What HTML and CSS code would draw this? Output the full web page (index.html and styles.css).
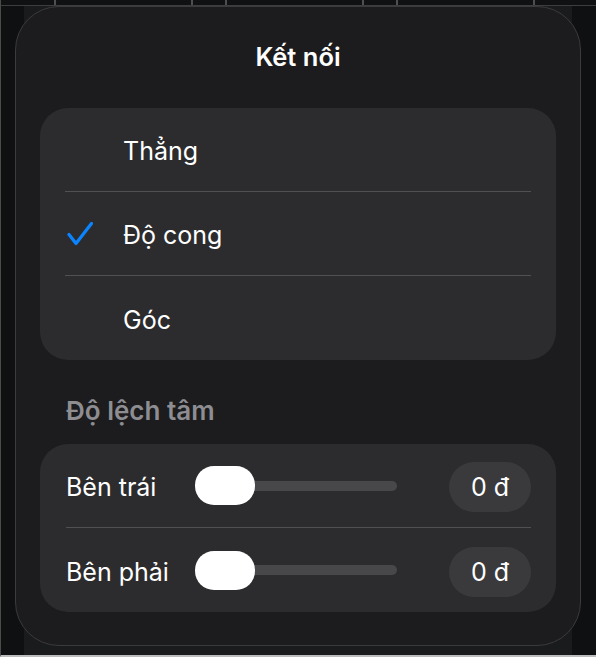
FILE: index.html
```html
<!DOCTYPE html>
<html lang="vi">
<head>
    <meta charset="UTF-8">
    <meta name="viewport" content="width=device-width, initial-scale=1.0">
    <title>Kết nối</title>
    <link rel="stylesheet" href="styles.css">
</head>
<body>
    <!-- mép thanh công cụ phía sau -->
    <div class="edge">
        <span class="cell" style="width:55px"></span>
        <span class="cell" style="width:137px"></span>
        <span class="cell" style="width:34px"></span>
        <span class="cell" style="width:137px"></span>
        <span class="cell" style="width:34px"></span>
        <span class="cell" style="width:137px"></span>
    </div>

    <div class="panel">
        <h2 class="title">Kết nối</h2>

        <div class="card">
            <div class="option">
                <span class="check"></span>
                <span class="label">Thẳng</span>
            </div>
            <div class="option selected">
                <span class="check">
                    <svg width="26" height="24" viewBox="0 0 26 24">
                        <polyline points="2,12.5 9,21.5 24.5,1.5" fill="none" stroke="#0a84ff" stroke-width="3.2" stroke-linecap="round" stroke-linejoin="round"/>
                    </svg>
                </span>
                <span class="label">Độ cong</span>
            </div>
            <div class="option">
                <span class="check"></span>
                <span class="label">Góc</span>
            </div>
        </div>

        <h3 class="section">Độ lệch tâm</h3>

        <div class="card">
            <div class="row">
                <span class="row-label">Bên trái</span>
                <div class="slider">
                    <div class="track"></div>
                    <div class="thumb"></div>
                </div>
                <span class="value">0 đ</span>
            </div>
            <div class="row">
                <span class="row-label">Bên phải</span>
                <div class="slider">
                    <div class="track"></div>
                    <div class="thumb"></div>
                </div>
                <span class="value">0 đ</span>
            </div>
        </div>
    </div>
</body>
</html>
```

FILE: styles.css
```css
* {
    box-sizing: border-box;
}
html, body {
    margin: 0;
    padding: 0;
}
body {
    width: 596px;
    height: 657px;
    overflow: hidden;
    font-family: Inter, "Noto Sans", sans-serif;
    color: #fff;
    background: linear-gradient(to right, #0f1011 0, #0f1011 24px, #1a1b1c 24px, #1a1b1c 572px, #0f1011 572px);
    border-left: 1px solid #4a4a4a;
    border-bottom: 2px solid #bdbdbd;
}
.edge {
    display: flex;
    height: 6px;
    background: #101112;
    border-bottom: 1px solid #3c3d3e;
}
.cell {
    height: 5px;
    border-right: 2px solid #4e4f50;
}
.panel {
    margin: 0 15px 0 14px;
    padding: 36px 24px 33px;
    background: #1c1c1e;
    border: 1px solid #3b3b3e;
    border-radius: 44px;
}
.title {
    margin: 0;
    font-size: 25.5px;
    line-height: 28px;
    font-weight: 600;
    text-align: center;
}
.card {
    margin-top: 37px;
    background: #2c2c2e;
    border-radius: 28px;
    padding: 0 25px;
}
.option {
    display: flex;
    align-items: center;
    height: 84px;
    border-bottom: 1px solid #505054;
}
.option:last-child {
    border-bottom: none;
}
.check {
    width: 58px;
    padding-left: 2px;
    display: flex;
    align-items: center;
}
.label {
    padding-top: 3px;
    font-size: 25px;
    line-height: 28px;
}
.section {
    margin: 37px 0 19px;
    padding-left: 26px;
    font-size: 26px;
    line-height: 28px;
    font-weight: 600;
    color: #8d8d92;
}
.card + .section + .card {
    margin-top: 0;
    padding: 0 25px 0 26px;
}
.row {
    display: flex;
    align-items: center;
    height: 84px;
    border-bottom: 1px solid #505054;
}
.row:last-child {
    border-bottom: none;
}
.row-label {
    width: 129px;
    padding-top: 3px;
    font-size: 25px;
    line-height: 28px;
}
.slider {
    position: relative;
    width: 202px;
    height: 39px;
    display: flex;
    align-items: center;
}
.track {
    width: 100%;
    height: 10px;
    border-radius: 5px;
    background: #48484b;
}
.thumb {
    position: absolute;
    left: 0;
    top: 0;
    width: 60px;
    height: 39px;
    border-radius: 19px;
    background: #fff;
}
.value {
    margin-left: auto;
    margin-top: 3px;
    width: 82px;
    height: 50px;
    border-radius: 25px;
    background: #3a3a3c;
    font-size: 25px;
    line-height: 50px;
    text-align: center;
}
```
